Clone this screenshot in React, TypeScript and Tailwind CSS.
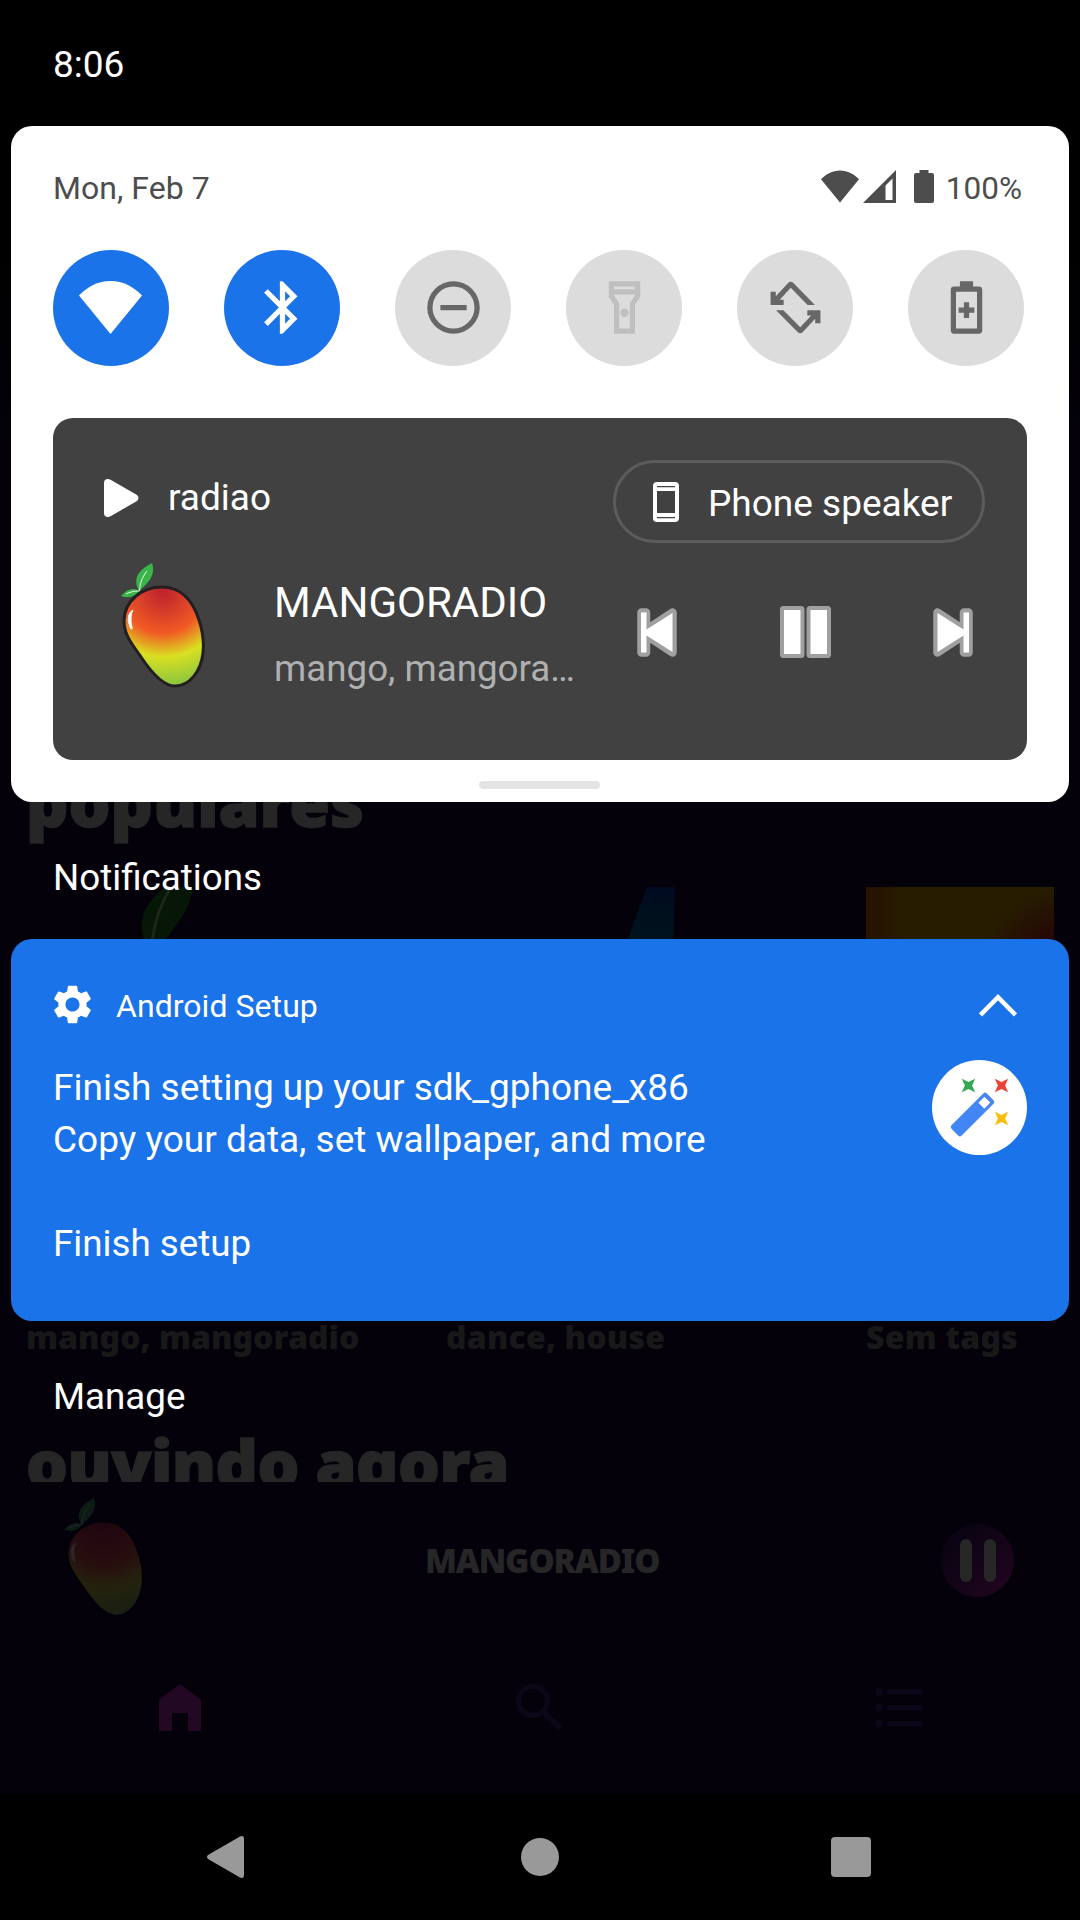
import React from "react";
import { MdSettings } from "react-icons/md";

function Mango({ id, outline, className }: { id: string; outline: string; className: string }) {
  return (
    <svg viewBox="0 0 85 125" className={className} fill="none">
      <defs>
        <radialGradient id={id} gradientUnits="userSpaceOnUse" cx="42" cy="28" r="94">
          <stop offset="0.05" stopColor="#c1272d" />
          <stop offset="0.45" stopColor="#f15a24" />
          <stop offset="0.7" stopColor="#d9e021" />
          <stop offset="1" stopColor="#8cc63f" />
        </radialGradient>
      </defs>
      <path
        d="M41 24C60 24 72 38 78 57C82 69 83 80 82 90C80 109 68 123 54 123C42 123 30 109 20 94C10 80 3 71 3 58C3 38 21 24 41 24Z"
        fill={`url(#${id})`}
        stroke={outline}
        strokeWidth="3"
      />
      <path d="M18 28C12 16 16 8 31 0C35 13 27 20 18 28Z" fill="#39b54a" />
      <path d="M18 28C13 24 6 26 0 33C8 36 14 33 18 28Z" fill="#39b54a" />
      <path d="M18.500 28C19 19 22 13 26 8M18 28C13 28 9 29 5 31" stroke="#e8f5e0" strokeWidth="1" />
      <path d="M12 47C6 50 6 59 10 66C12 66 11 65 10.500 62C9.500 56 10 51 12 47Z" fill="#fff" stroke="#fff" strokeWidth="0.800" />
    </svg>
  );
}

function WifiFan({ className }: { className: string }) {
  return (
    <svg viewBox="0 0 63 53" className={className} fill="currentColor">
      <path d="M0 14.500C8 6 19 0 31.500 0S55 6 63 14.500L31.500 53Z" />
    </svg>
  );
}

function Tile({ active, muted, children }: { active?: boolean; muted?: boolean; children: React.ReactNode }) {
  const tone = active ? "bg-[#1b73e9] text-white" : muted ? "bg-[#dcdcdc] text-[#bfbfbf]" : "bg-[#dcdcdc] text-[#676767]";
  return <div className={`flex size-[116px] items-center justify-center rounded-full pb-[2px] ${tone}`}>{children}</div>;
}

function TileIcon({ children }: { children: React.ReactNode }) {
  return (
    <svg viewBox="0 0 24 24" className="size-[63px]" fill="currentColor" fillRule="evenodd">
      {children}
    </svg>
  );
}

function QuickTiles() {
  return (
    <div className="mt-[42px] flex gap-[55px]">
      <Tile active>
        <WifiFan className="mr-[1px] h-[53px] w-[63px]" />
      </Tile>
      <Tile active>
        <TileIcon>
          <path d="M17.710 7.710L12 2h-1v7.590L6.410 5 5 6.410 10.590 12 5 17.590 6.410 19 11 14.410V22h1l5.710-5.710-4.300-4.290 4.300-4.290zM13 5.830l1.880 1.880L13 9.590V5.830zm1.880 10.460L13 18.170v-3.760l1.880 1.880z" />
        </TileIcon>
      </Tile>
      <Tile>
        <TileIcon>
          <path d="M12 2a10 10 0 1 0 0 20 10 10 0 0 0 0-20zm0 2a8 8 0 1 1 0 16 8 8 0 0 1 0-16zM7 11h10v2H7z" />
        </TileIcon>
      </Tile>
      <Tile muted>
        <TileIcon>
          <path d="M18 2H6v6l2 3v11h8V11l2-3V2zm-2 2v1H8V4h8zm-2 6.400V20h-4v-9.610l-2-3V7h8v.390l-2 3.010z" />
          <circle cx="12" cy="14" r="1.600" />
        </TileIcon>
      </Tile>
      <Tile>
        <TileIcon>
          <path d="M2.500 6h2v1.700L9.200 2.700q1-1 2 0L19.400 11H16.600L10.200 4.500 6 9h1.500v2h-5z" />
          <path d="M21.500 18h-2v-1.700L14.800 21.300q-1 1-2 0L4.600 13H7.400L13.800 19.500 18 15h-1.500v-2h5z" />
        </TileIcon>
      </Tile>
      <Tile>
        <TileIcon>
          <path d="M9.500 2h5v2h2.200q1.300 0 1.300 1.300v15.400q0 1.300-1.300 1.300H7.300Q6 22 6 20.700V5.300Q6 4 7.300 4h2.200zM8 6v14h8V6z" />
          <path d="M11 10h2v2h2v2h-2v2h-2v-2H9v-2h2z" />
        </TileIcon>
      </Tile>
    </div>
  );
}

function SkipIcon({ className }: { className: string }) {
  return (
    <svg viewBox="0 0 40 49" className={className}>
      <path d="M4.500 4.500V44.500L31 27V44.500H35.500V4.500H31V22Z" fill="#a0a0a0" stroke="#a0a0a0" strokeWidth="8.500" strokeLinejoin="round" />
      <path d="M4.500 5V44L30.500 27.500V44.500H36V4.500H30.500V21.500Z" fill="#fff" />
    </svg>
  );
}

function MediaCard() {
  return (
    <div className="mt-[52px] flex h-[342px] w-[974px] flex-col rounded-[20px] bg-[#414141] pt-[42px] pr-[42px] text-white">
      <div className="flex h-[83px] items-start justify-between">
        <div className="flex items-center pt-[16px] pl-[51px]">
          <svg viewBox="0 0 36 38" className="h-[38px] w-[36px]" fill="#fff">
            <path d="M0 4Q0 0 4 0Q5 0 7 1L33 16Q36 19 33 22L7 37Q5 38 4 38Q0 38 0 34Z" />
          </svg>
          <span className="ml-[28px] text-[37px] leading-[44px]">radiao</span>
        </div>
        <div className="flex h-[83px] w-[372px] items-center rounded-full border-[3px] border-[#5c5c5c] pl-[37px]">
          <svg viewBox="0 0 26 40" className="h-[40px] w-[26px]" fill="#fff" fillRule="evenodd">
            <path d="M4 0h18q4 0 4 4v32q0 4-4 4H4q-4 0-4-4V4q0-4 4-4zM4 4v1.300h18V4zM4 9v22h18V9zM4 35v1.300h18V35z" />
          </svg>
          <span className="ml-[29px] pt-[4px] text-[37px] leading-[44px] whitespace-nowrap">Phone speaker</span>
        </div>
      </div>
      <div className="mt-[20px] flex">
        <Mango id="mango-media" outline="#231f20" className="ml-[68px] h-[125px] w-[85px]" />
        <div className="ml-[68px] w-[306px] pt-[15px]">
          <div className="text-[42px] leading-[50px]">MANGORADIO</div>
          <div className="mt-[19px] text-[36.750px] leading-[44px] text-[#b0b0b0]">mango, mangora…</div>
        </div>
        <div className="mt-[43px] ml-[57px] flex h-[52px] w-[336px] items-center justify-between">
          <SkipIcon className="h-[49px] w-[40px] -scale-x-100" />
          <svg viewBox="0 0 51 52" className="h-[52px] w-[51px]" fill="#fff" stroke="#a0a0a0" strokeWidth="4">
            <rect x="2" y="2" width="20.500" height="48" rx="1.500" />
            <rect x="28.500" y="2" width="20.500" height="48" rx="1.500" />
          </svg>
          <SkipIcon className="h-[49px] w-[40px]" />
        </div>
      </div>
    </div>
  );
}

function QuickSettings() {
  return (
    <section className="mx-[11px] flex h-[676px] flex-col rounded-[21px] bg-white px-[42px] pt-[42px]">
      <div className="flex h-[40px] w-[969px] items-center justify-between text-[31.500px] leading-[40px] text-[#4d4d4d]">
        <span className="text-[32px] tracking-[0.050px]">Mon, Feb 7</span>
        <div className="flex h-[40px] items-center">
          <WifiFan className="mb-[4px] h-[33px] w-[38px]" />
          <svg viewBox="0 0 33 33" className="mb-[3px] ml-[4px] size-[33px]" fill="currentColor" fillRule="evenodd">
            <path d="M0 33L33 0V33ZM22.500 15.500V30H29.500V8.500Z" />
          </svg>
          <svg viewBox="0 0 20 33" className="mb-[3px] ml-[18px] h-[33px] w-[20px]" fill="currentColor">
            <path d="M5.500 0h9v3H18q2 0 2 2v26q0 2-2 2H2q-2 0-2-2V5q0-2 2-2h3.500z" />
          </svg>
          <span className="ml-[12px] pt-[2px]">100%</span>
        </div>
      </div>
      <QuickTiles />
      <MediaCard />
      <div className="mt-[21px] ml-[426px] h-[8px] w-[121px] rounded-full bg-[#e4e4e4]" />
    </section>
  );
}

function Sparkle({ x, y, fill }: { x: number; y: number; fill: string }) {
  return <path transform={`translate(${x} ${y})`} d="M-6.700-6.700L0-3.600L6.700-6.700L3.600 0L6.700 6.700L0 3.600L-6.700 6.700L-3.600 0Z" fill={fill} />;
}

function SetupNotification() {
  return (
    <section className="mx-[11px] mt-[39px] flex h-[382px] flex-col rounded-[21px] bg-[#1b73e9] px-[42px] pt-[42px] text-white">
      <div className="flex h-[48px] items-center">
        <MdSettings className="mb-[2px] -ml-[4px] size-[47px]" />
        <span className="ml-[20px] pt-[1px] text-[32px] leading-[40px] tracking-[0.050px]">Android Setup</span>
        <svg viewBox="0 0 38 23" className="mr-[10px] ml-auto h-[23px] w-[38px]" fill="none" stroke="#fff" strokeWidth="4.500">
          <path d="M1.500 21L19 3.200L36.500 21" />
        </svg>
      </div>
      <div className="mt-[31px] flex justify-between">
        <p className="pt-[2px] text-[37px] leading-[52px]">
          Finish setting up your sdk_gphone_x86
          <br />
          Copy your data, set wallpaper, and more
        </p>
        <svg viewBox="0 0 95 95" className="size-[95px]">
          <circle cx="47.500" cy="47.500" r="47.500" fill="#fff" />
          <g transform="translate(40.500 54.500) rotate(-45)">
            <rect x="-25" y="-7.200" width="50" height="14.400" rx="2.500" fill="#4285f4" />
            <rect x="12.500" y="-4.200" width="8.500" height="8.400" fill="#fff" />
          </g>
          <Sparkle x={36.500} y={25.500} fill="#34a853" />
          <Sparkle x={69.500} y={25.500} fill="#ea4335" />
          <Sparkle x={69.500} y={58.500} fill="#fbbc04" />
        </svg>
      </div>
      <div className="mt-[56px] text-[36.750px] leading-[44px]">Finish setup</div>
    </section>
  );
}

function DimmedApp() {
  return (
    <div className="absolute inset-x-0 top-0 flex h-[1794px] flex-col overflow-hidden bg-linear-to-b from-black from-5% to-[#04010b] to-25% font-['Noto_Sans',sans-serif] font-black text-[#262626]">
      <div className="mt-[761px] ml-[26px] h-[80px] text-[66px] leading-[80px] [-webkit-text-stroke:1.500px_#262626]">populares</div>
      <div className="mt-[46px] ml-[26px] flex h-[430px] gap-[28px]">
        <div className="w-[392px] shrink-0 bg-[#05010b]">
          <svg viewBox="0 0 392 60" className="h-[60px] w-[392px]">
            <path d="M138 60C156 48 238 42 262 60Z" fill="#050307" />
            <path d="M120 60C112 35 114 22 138 0H167C164 25 148 40 134 60Z" fill="#061708" />
            <path d="M126 56C128 34 134 18 145 0" stroke="#1c261c" strokeWidth="3" fill="none" />
          </svg>
        </div>
        <div className="w-[392px] shrink-0 bg-[#05010b]">
          <svg viewBox="0 0 392 60" className="h-[60px] w-[392px]">
            <defs>
              <linearGradient id="beam" x2="0" y2="1">
                <stop stopColor="#000a22" />
                <stop offset="0.400" stopColor="#00101e" />
                <stop offset="1" stopColor="#00141c" />
              </linearGradient>
            </defs>
            <path d="M201 0H229L227 60H179Z" fill="url(#beam)" />
          </svg>
        </div>
        <div className="h-[188px] w-[188px] shrink-0 bg-[radial-gradient(circle_at_105%_45%,#260606_0,#260606_15%,#261d0100_38%),linear-gradient(90deg,#271400_0,#271400_8%,#261d01_20%)]" />
      </div>
      <div className="ml-[26px] flex h-[40px] text-[32px] leading-[40px] text-[#181818]">
        <span className="w-[420px] tracking-[0.050px]">mango, mangoradio</span>
        <span className="w-[420px] tracking-[0.200px]">dance, house</span>
        <span className="tracking-[0.200px]">Sem tags</span>
      </div>
      <div className="mt-[65px] ml-[26px] h-[60px] overflow-hidden text-[66px] leading-[80px] tracking-[-0.550px] [-webkit-text-stroke:1.500px_#262626]">ouvindo agora</div>
      <div className="flex h-[156px] items-start pt-[16px]">
        <Mango id="mango-player" outline="#000" className="ml-[64px] h-[120px] w-[82px] opacity-[0.150]" />
        <div className="ml-[279px] w-[375px] pt-[43px] text-[33px] leading-[40px] tracking-[-1.100px]">MANGORADIO</div>
        <div className="mt-[26px] ml-[141px] flex size-[73px] items-center justify-center gap-[12px] rounded-full bg-linear-to-br from-[#0a0312] from-20% to-[#240622]">
          <div className="h-[43px] w-[12px] rounded-full bg-[#272727]" />
          <div className="h-[43px] w-[12px] rounded-full bg-[#272727]" />
        </div>
      </div>
      <div className="mt-[46px] flex h-[47px] items-start">
        <svg viewBox="0 0 42 47" className="ml-[159px] h-[47px] w-[42px]" fill="#220822">
          <path d="M21 0L42 15.500V47H29V29H13V47H0V15.500Z" />
        </svg>
        <svg viewBox="0 0 47 47" className="ml-[315px] size-[47px]" fill="none" stroke="#0d0618" strokeWidth="5">
          <circle cx="17" cy="17" r="14.500" />
          <path d="M28 29L44.500 44" strokeWidth="6" />
        </svg>
        <svg viewBox="0 0 49 47" className="ml-[312px] h-[47px] w-[49px]" stroke="#0d0618" strokeWidth="5" strokeLinecap="round">
          <path d="M14.500 7.700H46M14.500 23.400H46M14.500 39.400H46" />
          <path d="M4 7.700h.010M4 23.400h.010M4 39.400h.010" strokeWidth="7.600" />
        </svg>
      </div>
    </div>
  );
}

function NavBar() {
  return (
    <nav className="mt-auto flex h-[126px] items-center bg-black">
      <svg viewBox="0 0 37 42" className="ml-[207px] h-[42px] w-[37px]" fill="#999">
        <path d="M1 19L33 .500Q37-1 37 3V39Q37 43 33 41.500L1 23Q-1 21 1 19Z" />
      </svg>
      <div className="ml-[277px] size-[38px] rounded-full bg-[#999]" />
      <div className="ml-[272px] size-[40px] rounded-[4px] bg-[#999]" />
    </nav>
  );
}

export default function App() {
  return (
    <div className="relative h-[1920px] w-[1080px] overflow-hidden bg-black font-[Roboto,sans-serif]">
      <DimmedApp />
      <main className="relative flex h-[1920px] flex-col text-white">
        <header className="h-[126px] bg-black pt-[43px] pl-[53px] text-[37px] leading-[44px]">8:06</header>
        <QuickSettings />
        <h2 className="mt-[54px] ml-[53px] text-[36.750px] leading-[44px]">Notifications</h2>
        <SetupNotification />
        <div className="mt-[54px] ml-[53px] text-[36.750px] leading-[44px]">Manage</div>
        <NavBar />
      </main>
    </div>
  );
}
